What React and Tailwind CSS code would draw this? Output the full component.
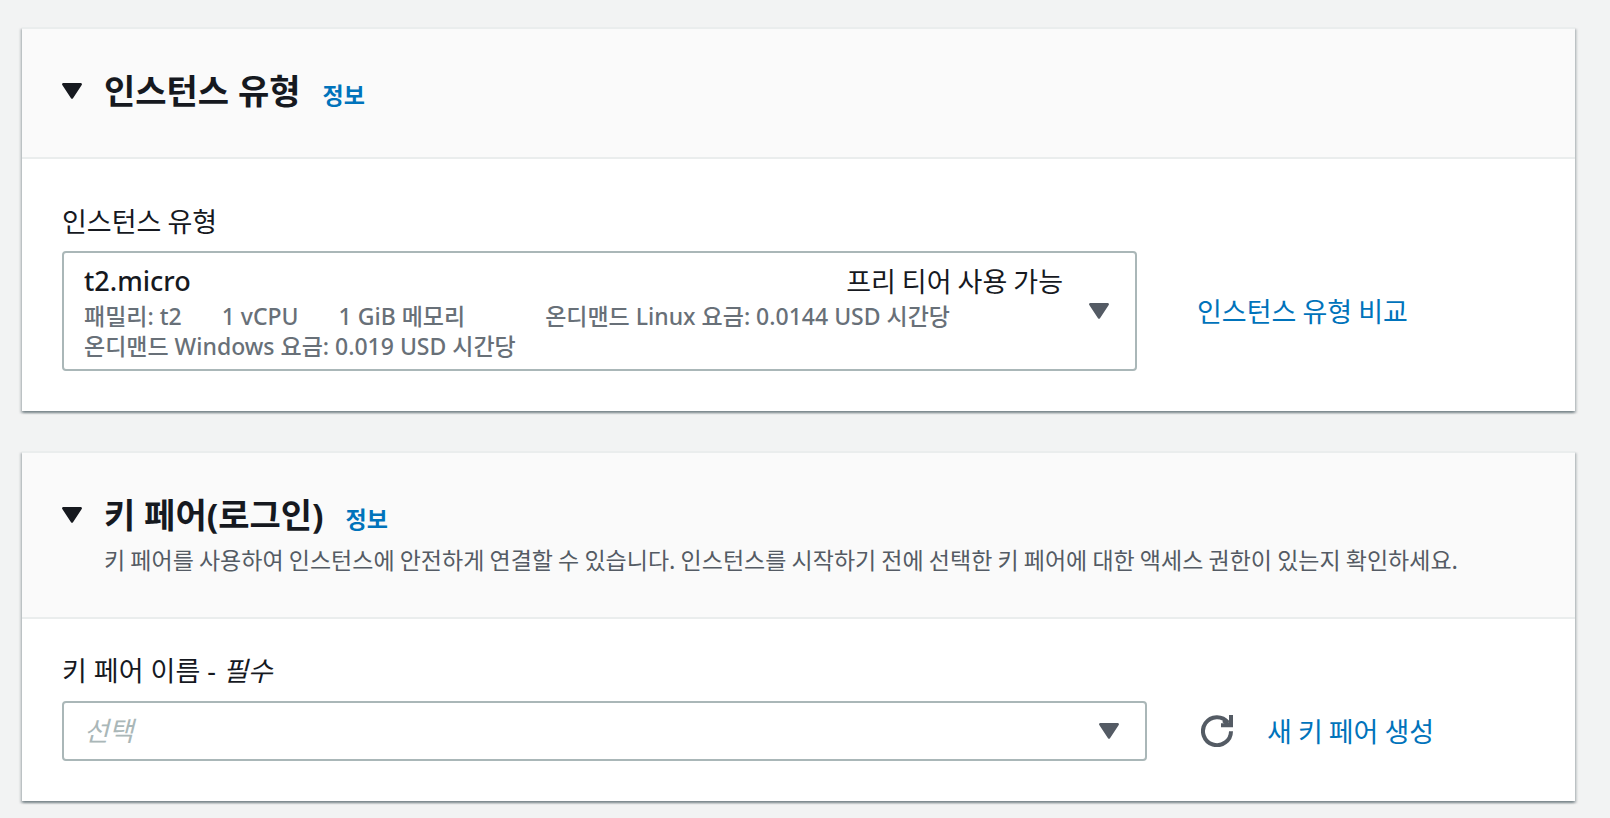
import React from "react";

function Caret({ className }) {
  return (
    <svg viewBox="0 0 20 16" className={"h-4 w-5 shrink-0 " + className} fill="currentColor" aria-hidden="true">
      <path d="M1.4 0h17.2c1.1 0 1.7 1.2 1.1 2.1L11 15.2c-.5.8-1.5.8-2 0L.3 2.1C-.3 1.200.3 0 1.4 0z" />
    </svg>
  );
}

function RefreshIcon() {
  return (
    <svg viewBox="0 0 32 32" className="size-8" fill="none" stroke="currentColor" strokeWidth="4" aria-hidden="true">
      <path d="M30 16.200A14 14 0 1 1 27 7.500" />
      <path d="M30 0v10.500M20 10.200h12" />
      <path d="M22.500 5.500l6 5" />
    </svg>
  );
}

function Panel({ title, description, children }) {
  return (
    <section className="border-t-2 border-[#eaeded] bg-white shadow-[0_2px_2px_0_rgba(0,28,36,0.3),2px_2px_2px_0_rgba(0,28,36,0.15),-2px_2px_2px_0_rgba(0,28,36,0.15)]">
      <header className="border-b-2 border-[#eaeded] bg-[#fafafa] px-10 pt-10 pb-11">
        <div className="flex items-baseline">
          <button type="button" aria-expanded="true" className="flex items-baseline gap-[22px]">
            <Caret className="self-center text-[#16191f]" />
            <h2 className="text-[34px] leading-[44px] font-bold">{title}</h2>
          </button>
          <a href="#info" className="ml-[22px] text-[23px] leading-8 font-bold text-[#0073bb]">
            정보
          </a>
        </div>
        {description && (
          <p className="mt-[9px] pl-[42px] font-['Noto_Sans_CJK_KR',sans-serif] text-[23px] leading-[27px] text-[#545b64]">
            {description}
          </p>
        )}
      </header>
      {children}
    </section>
  );
}

export default function App() {
  return (
    <main className="flex min-h-screen flex-col gap-10 bg-[#f2f3f3] pt-[27px] pr-[35px] pb-4 pl-[22px] font-['Noto_Sans','Noto_Sans_CJK_KR',sans-serif] text-[27px] leading-10 text-[#16191f]">
      <Panel title="인스턴스 유형">
        <div className="px-10 pt-[42px] pb-10">
          <div id="type-label" className="mb-[10px] font-['Noto_Sans_CJK_KR',sans-serif]">인스턴스 유형</div>
          <div className="flex items-center">
            <button
              type="button"
              aria-haspopup="listbox"
              aria-labelledby="type-label"
              className="flex flex-1 items-center justify-between rounded-sm border-2 border-[#aab7b8] bg-white py-2 pr-[26px] pl-5 text-left"
            >
              <span className="mr-[26px] min-w-0 flex-1">
                <span className="flex justify-between">
                  <span className="font-medium">t2.micro</span>
                  <span className="font-['Noto_Sans_CJK_KR',sans-serif]">프리 티어 사용 가능</span>
                </span>
                <span className="flex flex-wrap gap-x-10 text-[23px] leading-[30px] font-medium text-[#687078]">
                  <span>패밀리: t2</span>
                  <span>1 vCPU</span>
                  <span className="mr-10">1 GiB 메모리</span>
                  <span>온디맨드 Linux 요금: 0.0144 USD 시간당</span>
                  <span>온디맨드 Windows 요금: 0.019 USD 시간당</span>
                </span>
              </span>
              <Caret className="text-[#545b64]" />
            </button>
            <div className="w-[398px] pl-[60px] font-['Noto_Sans_CJK_KR',sans-serif]">
              <a href="#compare" className="text-[#0073bb]">인스턴스 유형 비교</a>
            </div>
          </div>
        </div>
      </Panel>

      <Panel
        title="키 페어(로그인)"
        description="키 페어를 사용하여 인스턴스에 안전하게 연결할 수 있습니다. 인스턴스를 시작하기 전에 선택한 키 페어에 대한 액세스 권한이 있는지 확인하세요."
      >
        <div className="px-10 pt-8 pb-10">
          <label htmlFor="key-pair" className="mb-[10px] block">
            키 페어 이름 - <em>필수</em>
          </label>
          <div className="flex items-center">
            <div className="relative flex-1">
              <select
                id="key-pair"
                defaultValue=""
                className="block h-[60px] w-full appearance-none rounded-sm border-2 border-[#aab7b8] bg-white pr-16 pl-5 text-[#aab7b8] italic"
              >
                <option value="">선택</option>
              </select>
              <Caret className="pointer-events-none absolute top-[22px] right-7 text-[#545b64]" />
            </div>
            <div className="flex w-[388px] items-center gap-[34px] pl-[54px] font-['Noto_Sans_CJK_KR',sans-serif]">
              <button type="button" aria-label="새로 고침" className="text-[#545b64]">
                <RefreshIcon />
              </button>
              <a href="#create" className="text-[#0073bb]">새 키 페어 생성</a>
            </div>
          </div>
        </div>
      </Panel>
    </main>
  );
}
